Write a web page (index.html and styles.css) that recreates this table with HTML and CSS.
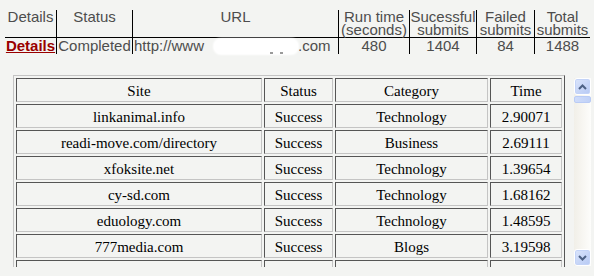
FILE: index.html
```
<!DOCTYPE html>
<html>
<head>
<meta charset="utf-8">
<title>Submission report</title>
<link rel="stylesheet" href="styles.css">
</head>
<body>
<div class="summary">
  <div class="hd">Details</div>
  <div class="hd sep">Status</div>
  <div class="hd sep">URL</div>
  <div class="hd sep">Run time<br>(seconds)</div>
  <div class="hd sep">Sucessful<br>submits</div>
  <div class="hd sep">Failed<br>submits</div>
  <div class="hd sep">Total<br>submits</div>

  <div class="dt"><a class="details" href="#">Details</a></div>
  <div class="dt sep">Completed</div>
  <div class="dt sep url">http://www<span class="masked"><i class="tail"></i></span>.com</div>
  <div class="dt sep">480</div>
  <div class="dt sep">1404</div>
  <div class="dt sep">84</div>
  <div class="dt sep">1488</div>
</div>

<div class="viewer">
  <div class="clip">
    <table class="sites">
      <tr><th class="w-site">Site</th><th class="w-status">Status</th><th class="w-cat">Category</th><th class="w-time">Time</th></tr>
      <tr><td>linkanimal.info</td><td>Success</td><td>Technology</td><td>2.90071</td></tr>
      <tr><td>readi-move.com/directory</td><td>Success</td><td>Business</td><td>2.69111</td></tr>
      <tr><td>xfoksite.net</td><td>Success</td><td>Technology</td><td>1.39654</td></tr>
      <tr><td>cy-sd.com</td><td>Success</td><td>Technology</td><td>1.68162</td></tr>
      <tr><td>eduology.com</td><td>Success</td><td>Technology</td><td>1.48595</td></tr>
      <tr><td>777media.com</td><td>Success</td><td>Blogs</td><td>3.19598</td></tr>
      <tr><td></td><td></td><td></td><td></td></tr>
    </table>
  </div>
  <div class="scrollbar">
    <div class="sb-btn">
      <svg width="9" height="6" viewBox="0 0 9 6"><polyline points="1,5 4.5,1.5 8,5" fill="none" stroke="#4d6185" stroke-width="2"/></svg>
    </div>
    <div class="sb-thumb"></div>
    <div class="sb-track"></div>
    <div class="sb-btn">
      <svg width="9" height="6" viewBox="0 0 9 6"><polyline points="1,1 4.5,4.5 8,1" fill="none" stroke="#4d6185" stroke-width="2"/></svg>
    </div>
  </div>
</div>
</body>
</html>
```
FILE: styles.css
```
body {
  margin: 0;
  background: #f3f4f2;
}

/* run summary strip */
.summary {
  display: grid;
  grid-template-columns: 51px 76px 206px 71px 67px 58px 56px;
  width: 585px;
  margin: 10px 0 0 5px;
  font: 15px/13px "Liberation Sans", Arial, sans-serif;
  color: #4d4d4d;
}

.summary > div {
  box-sizing: border-box;
  text-align: center;
  white-space: nowrap;
}

.summary .hd {
  height: 28px;
  border-bottom: 1px solid #000;
}

.summary .dt {
  height: 16px;
  line-height: 16px;
}

.summary .sep {
  border-left: 1px solid #000;
}

.summary .url {
  text-align: left;
  padding-left: 1px;
}

.masked {
  display: inline-block;
  position: relative;
  width: 94px;
  height: 15px;
  vertical-align: -3px;
}

.masked::before {
  content: "";
  position: absolute;
  left: 10px;
  right: 0;
  top: 0;
  bottom: 0;
  background: #fff;
  border-radius: 7px;
  box-shadow: 0 0 2px 1px #fff;
}

.masked .tail {
  position: absolute;
  left: 66px;
  top: 13px;
  width: 13px;
  height: 2px;
  border-left: 3px solid #9a9a9a;
  border-right: 3px solid #9a9a9a;
  box-sizing: border-box;
}

.details {
  font-weight: bold;
  color: #990000;
  text-decoration: underline;
}

/* scrolling results frame */
.viewer {
  display: flex;
  align-items: flex-start;
  margin-top: 21px;
  padding-left: 13px;
}

.clip {
  width: 552px;
  height: 192px;
  overflow: hidden;
}

.sites {
  table-layout: fixed;
  width: 552px;
  border-collapse: separate;
  border-spacing: 2px;
  border: 1px solid;
  border-color: #c4c4c4 #555 #555 #c4c4c4;
  font: 15px "Liberation Serif", "Times New Roman", serif;
  color: #000;
}

.sites th,
.sites td {
  box-sizing: border-box;
  height: 24px;
  padding: 2px 0 0;
  line-height: 20px;
  font-weight: normal;
  text-align: center;
  white-space: nowrap;
  border: 1px solid;
  border-color: #555 #c4c4c4 #c4c4c4 #555;
}

.w-site { width: 246px; }
.w-status { width: 69px; }
.w-cat { width: 153px; }
.w-time { width: 72px; }

.scrollbar {
  display: flex;
  flex-direction: column;
  width: 17px;
  height: 188px;
  margin: 3px 0 0 9px;
  background: linear-gradient(to right, #f1efe8, #fdfdfb);
}

.sb-btn {
  box-sizing: border-box;
  height: 17px;
  display: flex;
  align-items: center;
  justify-content: center;
  border: 1px solid #fff;
  border-radius: 3px;
  background: linear-gradient(135deg, #dbe5fb, #b6c9f4);
  box-shadow: inset 0 0 0 1px #c3d3f7;
}

.sb-thumb {
  box-sizing: border-box;
  height: 7px;
  margin-top: 1px;
  border: 1px solid #b9cbf5;
  border-radius: 2px;
  background: linear-gradient(to right, #cfdcfa, #c0d1f7);
}

.sb-track {
  flex: 1;
}
```
